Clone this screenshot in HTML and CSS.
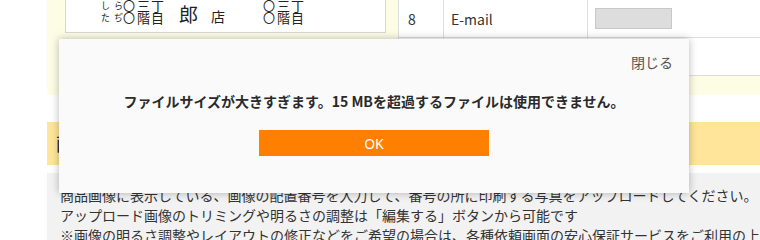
FILE: index.html
```html
<!DOCTYPE html>
<html lang="ja">
<head>
<meta charset="utf-8">
<title>アップロード</title>
<link rel="stylesheet" href="styles.css">
</head>
<body>
<div class="page">
  <section class="info">
    <div class="label-box">
      <div class="col c1"><span>し</span><span>た</span></div>
      <div class="col c2"><span>ら</span><span>ぢ</span></div>
      <div class="col c3"><span>〇</span><span>〇</span></div>
      <div class="col c4"><span>三</span><span>階</span></div>
      <div class="col c5"><span>丁</span><span>目</span></div>
      <div class="col c6"><span>郎</span></div>
      <div class="col c7"><span>店</span></div>
      <div class="col c3"><span>〇</span><span>〇</span></div>
      <div class="col c4"><span>三</span><span>階</span></div>
      <div class="col c5 c-last"><span>丁</span><span>目</span></div>
    </div>
    <table class="fields">
      <colgroup>
        <col class="w-num">
        <col class="w-name">
        <col>
      </colgroup>
      <tr class="row-first">
        <td class="num">8</td>
        <td class="name">E-mail</td>
        <td class="value"><span class="input"></span></td>
      </tr>
      <tr class="row-second">
        <td class="num">9</td>
        <td class="name">備考</td>
        <td class="value"></td>
      </tr>
    </table>
  </section>

  <h2 class="band">画像アップロード</h2>

  <section class="notes">
    <p>商品画像に表示している、画像の配置番号を入力して、番号の所に印刷する写真をアップロードしてください。</p>
    <p>アップロード画像のトリミングや明るさの調整は「編集する」ボタンから可能です</p>
    <p>※画像の明るさ調整やレイアウトの修正などをご希望の場合は、各種依頼画面の安心保証サービスをご利用の上</p>
  </section>
</div>

<div class="modal">
  <div class="modal-close">閉じる</div>
  <p class="modal-message">ファイルサイズが大きすぎます。15 MBを超過するファイルは使用できません。</p>
  <div class="modal-actions"><button class="ok-btn" type="button">OK</button></div>
</div>
</body>
</html>
```

FILE: styles.css
```css
html, body {
  margin: 0;
  padding: 0;
  background: #ffffff;
  font-family: "Noto Sans CJK JP", "Noto Sans", sans-serif;
  color: #333333;
  overflow: hidden;
}

.page {
  margin-left: 47px;
  width: 713px;
}

.info {
  background: #fdfde6;
  display: flex;
  align-items: flex-start;
  padding: 0 0 19px 18px;
}

.label-box {
  width: 284px;
  height: 24px;
  background: #ffffff;
  border: 1px solid #d8d8d0;
  border-top: none;
  display: flex;
  align-items: flex-end;
  padding: 0 0 8px 35px;
  overflow: hidden;
  margin-right: 12px;
  color: #222;
}

.col {
  display: flex;
  flex-direction: column;
  justify-content: flex-end;
  line-height: 12px;
  font-size: 11px;
  flex: none;
}

.c1 { width: 13px; font-size: 9px; }
.c2 { width: 9px; font-size: 9px; }
.c3 { width: 14px; font-size: 12px; }
.c4 { width: 14px; font-size: 13px; }
.c5 { width: 28px; font-size: 13px; }
.c6 { width: 32px; font-size: 19px; line-height: 20px; }
.c7 { width: 52px; font-size: 14px; line-height: 16px; }
.c-last { width: 14px; }

.fields {
  flex: 1;
  border-collapse: collapse;
  table-layout: fixed;
  background: #ffffff;
  font-size: 14px;
  color: #333;
}

.w-num { width: 45px; }
.w-name { width: 144px; }

.fields td {
  border: 1px solid #dddddd;
  border-top: none;
  padding: 0 7px;
  vertical-align: middle;
}

.row-first td { height: 37px; }
.row-second td { height: 37px; }

.fields .num { padding-left: 9px; }
.fields td:last-child { border-right: none; }

.input {
  display: block;
  width: 75px;
  height: 19px;
  background: #dddddd;
  border: 1px solid #c8c8c8;
}

.band {
  margin: 27px 0 0;
  height: 43px;
  background: #ffe59a;
  font-size: 18px;
  font-weight: normal;
  line-height: 43px;
  padding-left: 9px;
  color: #222;
}

.notes {
  margin-top: 8px;
  background: #f2f2f2;
  padding: 12px 0 0 13px;
  font-size: 14px;
  line-height: 20px;
  color: #333;
  height: 60px;
}

.notes p {
  margin: 0;
  white-space: nowrap;
}

.modal {
  position: absolute;
  top: 39px;
  left: 59px;
  width: 630px;
  height: 154px;
  background: #fafafa;
  box-shadow: 0 0 8px rgba(0, 0, 0, 0.28);
  box-sizing: border-box;
  padding: 13px 16px 0;
}

.modal-close {
  text-align: right;
  font-size: 14px;
  line-height: 20px;
  color: #555;
}

.modal-message {
  margin: 19px 0 0;
  text-align: center;
  font-size: 14px;
  line-height: 20px;
  font-weight: bold;
  color: #2a2a2a;
}

.modal-actions {
  display: flex;
  justify-content: center;
  margin-top: 19px;
}

.ok-btn {
  width: 230px;
  height: 26px;
  border: none;
  background: #ff8000;
  color: #ffffff;
  font-family: "Noto Sans", "Noto Sans CJK JP", sans-serif;
  font-size: 14px;
  padding: 0;
}
```
